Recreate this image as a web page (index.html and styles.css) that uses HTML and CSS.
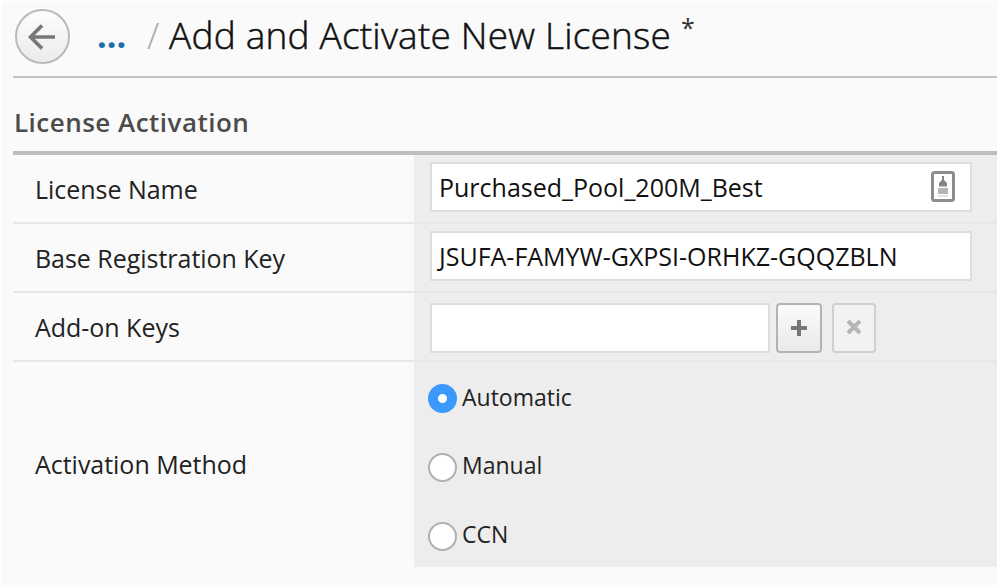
FILE: index.html
```html
<!DOCTYPE html>
<html lang="en">
<head>
<meta charset="utf-8">
<title>Add and Activate New License</title>
<link rel="stylesheet" href="styles.css">
</head>
<body>
<main class="page">
  <header class="header">
    <button class="back" type="button" aria-label="Back">
      <svg width="28" height="26" viewBox="0 0 28 26"><path d="M27 13H3M14 1.500 2.500 13 14 24.500" fill="none" stroke="#777" stroke-width="3.700"/></svg>
    </button>
    <a class="crumb">...</a>
    <span class="slash">/</span>
    <h1 class="title">Add and Activate New License</h1>
    <span class="star">*</span>
  </header>
  <h2 class="section">License Activation</h2>
  <form class="form">
    <div class="row">
      <div class="label">License Name</div>
      <div class="cell">
        <div class="field"><span>Purchased_Pool_200M_Best</span>
          <svg class="card" width="26" height="34" viewBox="0 0 26 34"><rect x="2.500" y="2.500" width="21" height="28" rx="2" fill="#fff" stroke="#8d8d8d" stroke-width="3"/><path d="M12 6h2v4l3 3v3.500H9V13l3-3Z" fill="#858585"/><path d="M8 18h10v6H8z" fill="#b5b5b5"/><path d="M8 26h10" stroke="#ddd" stroke-width="1.500"/></svg>
        </div>
      </div>
    </div>
    <div class="row">
      <div class="label">Base Registration Key</div>
      <div class="cell">
        <div class="field"><span>JSUFA-FAMYW-GXPSI-ORHKZ-GQQZBLN</span></div>
      </div>
    </div>
    <div class="row">
      <div class="label">Add-on Keys</div>
      <div class="cell keys">
        <div class="field short"></div>
        <button class="btn add" type="button" aria-label="Add"><svg width="18" height="18" viewBox="0 0 18 18"><path d="M9 1v16M1 9h16" stroke="#777" stroke-width="4"/></svg></button>
        <button class="btn remove" type="button" aria-label="Remove"><svg width="16" height="16" viewBox="0 0 16 16"><path d="m2 2 12 12M14 2 2 14" stroke="#b5b5b5" stroke-width="4"/></svg></button>
      </div>
    </div>
    <div class="row method">
      <div class="label">Activation Method</div>
      <div class="cell options">
        <div class="option"><i class="radio on"></i><span>Automatic</span></div>
        <div class="option"><i class="radio"></i><span>Manual</span></div>
        <div class="option"><i class="radio"></i><span>CCN</span></div>
      </div>
    </div>
  </form>
</main>
</body>
</html>
```
FILE: styles.css
```css
* { box-sizing: border-box; }
body {
  margin: 0;
  background: #fafafa;
  font-family: "Open Sans", sans-serif;
  color: #222;
  overflow: hidden;
}
.page {
  height: 585px;
  border: solid #fff;
  border-width: 1px 0 0 1px;
  padding-left: 12px;
  white-space: nowrap;
}
.header {
  display: flex;
  height: 77px;
  border-bottom: 2px solid #c3c3c3;
  padding-left: 2px;
}
.back {
  display: flex;
  align-items: center;
  justify-content: center;
  width: 55px;
  height: 55px;
  margin-top: 8px;
  padding: 0 2px 0 0;
  border: 2px solid #bababa;
  border-radius: 50%;
  background: linear-gradient(#fdfdfd, #ebebeb);
}
.crumb {
  width: 50px;
  margin-left: 27px;
  line-height: 69px;
  font-size: 34px;
  font-weight: 700;
  color: #1a6fa8;
}
.slash {
  width: 22px;
  line-height: 69px;
  font-size: 36px;
  font-weight: 300;
  color: #aaa;
}
.title {
  width: 512px;
  margin: 0;
  line-height: 67px;
  font-size: 37px;
  font-weight: 300;
  letter-spacing: 0.200px;
  -webkit-text-stroke: 0.500px #111;
  color: #111;
}
.star {
  line-height: 52px;
  font-size: 25px;
  color: #333;
}
.section {
  height: 77px;
  margin: 0;
  border-bottom: 4px solid #bdbdbd;
  padding-left: 1px;
  line-height: 88px;
  font-size: 26px;
  font-weight: 600;
  letter-spacing: 0.480px;
  color: #4b4b4b;
}
.row {
  display: grid;
  grid-template-columns: 401px 1fr;
  height: 69px;
  border-bottom: 2px solid #e7e7e7;
}
.method {
  height: 205px;
  border-bottom: 0;
}
.label {
  display: flex;
  align-items: center;
  padding-left: 22px;
  font-size: 25px;
  letter-spacing: -0.030px;
}
.method .label { padding-bottom: 2px; }
.cell {
  padding: 7px 0 0 16px;
  background: #ededed;
}
.field {
  display: flex;
  align-items: center;
  justify-content: space-between;
  width: 542px;
  height: 50px;
  border: 2px solid #ddd;
  padding: 0 14px 0 7px;
  background: #fff;
  font-size: 25px;
  color: #111;
}
.keys {
  display: flex;
  padding-top: 10px;
}
.short { width: 340px; }
.btn {
  display: flex;
  align-items: center;
  justify-content: center;
  height: 50px;
  padding: 0;
  border: 2px solid #b3b3b3;
  border-radius: 4px;
  background: linear-gradient(#fbfbfb, #e9e9e9);
}
.add { width: 46px; margin-left: 6px; }
.remove {
  width: 44px;
  margin-left: 10px;
  padding-bottom: 3px;
  border-color: #cfcfcf;
  background: #f2f2f2;
}
.options {
  display: grid;
  grid-template-rows: repeat(3, 29px);
  row-gap: 39.800px;
  padding: 22px 0 0 14px;
}
.option {
  display: flex;
  align-items: center;
  gap: 5px;
  font-size: 23px;
}
.option span { margin-top: -4px; }
.radio {
  width: 29px;
  height: 29px;
  border: 2px solid #b0b0b0;
  border-radius: 50%;
  background: #fff;
}
.on {
  border: 0;
  background: radial-gradient(circle, #fff 0 4px, #3b99fc 5px);
}
```
